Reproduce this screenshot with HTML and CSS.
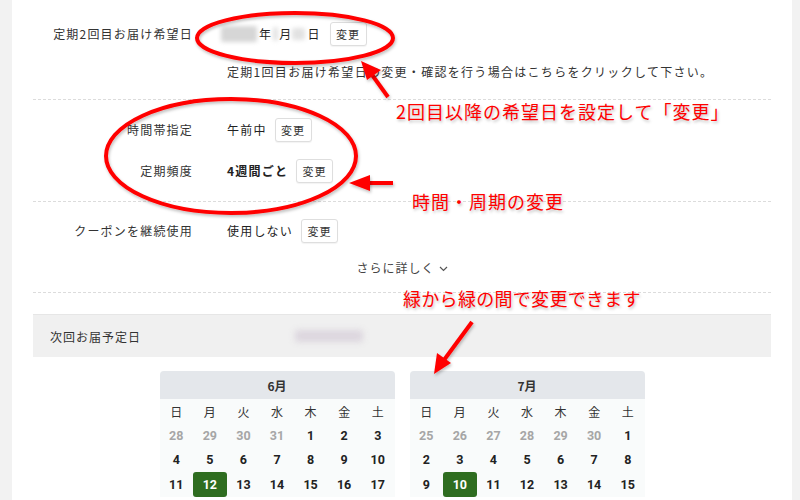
FILE: index.html
```html
<!DOCTYPE html>
<html lang="ja">
<head>
<meta charset="utf-8">
<link rel="stylesheet" href="styles.css">
</head>
<body>
<div class="page">
  <main class="main">
    <section class="sec sec1">
      <div class="row">
        <div class="label">定期2回目お届け希望日</div>
        <div class="value date">
          <span class="blur blur-y"></span><span>年</span><span class="blur blur-m"></span><span>月</span><span class="blur blur-d"></span><span>日</span>
          <button class="btn btn-first">変更</button>
        </div>
      </div>
      <p class="note">定期1回目お届け希望日の変更・確認を行う場合はこちらをクリックして下さい。</p>
    </section>
    <section class="sec sec2">
      <div class="row">
        <div class="label">時間帯指定</div>
        <div class="value">午前中<button class="btn">変更</button></div>
      </div>
      <div class="row">
        <div class="label">定期頻度</div>
        <div class="value strong">4週間ごと<button class="btn">変更</button></div>
      </div>
    </section>
    <section class="sec sec3">
      <div class="row">
        <div class="label">クーポンを継続使用</div>
        <div class="value">使用しない<button class="btn">変更</button></div>
      </div>
      <div class="more">さらに詳しく<svg class="chev" width="9" height="6" viewBox="0 0 9 6"><path d="M1 1 L4.5 4.5 L8 1" fill="none" stroke="#555" stroke-width="1.2"/></svg></div>
    </section>
    <div class="next">
      <span class="next-label">次回お届予定日</span>
      <span class="blur blur-next"></span>
    </div>
    <div class="cals">
      <div class="cal">
        <div class="cal-head">6月</div>
        <div class="cal-grid">
          <span class="dn">日</span><span class="dn">月</span><span class="dn">火</span><span class="dn">水</span><span class="dn">木</span><span class="dn">金</span><span class="dn">土</span>
          <span class="d off">28</span><span class="d off">29</span><span class="d off">30</span><span class="d off">31</span><span class="d">1</span><span class="d">2</span><span class="d">3</span>
          <span class="d">4</span><span class="d">5</span><span class="d">6</span><span class="d">7</span><span class="d">8</span><span class="d">9</span><span class="d">10</span>
          <span class="d">11</span><span class="d sel">12</span><span class="d">13</span><span class="d">14</span><span class="d">15</span><span class="d">16</span><span class="d">17</span>
        </div>
      </div>
      <div class="cal">
        <div class="cal-head">7月</div>
        <div class="cal-grid">
          <span class="dn">日</span><span class="dn">月</span><span class="dn">火</span><span class="dn">水</span><span class="dn">木</span><span class="dn">金</span><span class="dn">土</span>
          <span class="d off">25</span><span class="d off">26</span><span class="d off">27</span><span class="d off">28</span><span class="d off">29</span><span class="d off">30</span><span class="d">1</span>
          <span class="d">2</span><span class="d">3</span><span class="d">4</span><span class="d">5</span><span class="d">6</span><span class="d">7</span><span class="d">8</span>
          <span class="d">9</span><span class="d sel">10</span><span class="d">11</span><span class="d">12</span><span class="d">13</span><span class="d">14</span><span class="d">15</span>
        </div>
      </div>
    </div>
  </main>

  <svg class="marks" width="800" height="500" viewBox="0 0 800 500">
    <defs>
      <filter id="sh" x="-10%" y="-10%" width="130%" height="140%">
        <feDropShadow dx="1" dy="2" stdDeviation="1.5" flood-color="#000" flood-opacity="0.25"/>
      </filter>
    </defs>
    <g filter="url(#sh)" fill="none" stroke="#f00" stroke-width="4">
      <ellipse cx="295" cy="38" rx="98" ry="25"/>
      <ellipse cx="231" cy="156" rx="125" ry="57"/>
      <line x1="388" y1="97" x2="370" y2="72"/>
      <line x1="393" y1="183" x2="366" y2="183"/>
      <line x1="472" y1="322" x2="444" y2="360"/>
    </g>
    <g filter="url(#sh)" fill="#f00">
      <polygon points="361,61 381,70 367,80"/>
      <polygon points="349,183 370,175 370,191"/>
      <polygon points="434,374 437,353 451,363"/>
    </g>
  </svg>
  <div class="ann ann1">2回目以降の希望日を設定して「変更」</div>
  <div class="ann ann2">時間・周期の変更</div>
  <div class="ann ann3">緑から緑の間で変更できます</div>
</div>
</body>
</html>
```

FILE: styles.css
```css
html, body {
  margin: 0;
  padding: 0;
}
body {
  width: 800px;
  height: 500px;
  overflow: hidden;
  background: #f2f2f2;
  font-family: "Noto Sans CJK JP", "Noto Sans", sans-serif;
  color: #333;
}
.page {
  position: relative;
  width: 800px;
  height: 500px;
}
.main {
  margin-left: 12px;
  width: 738px;
  height: 500px;
  background: #fff;
  padding: 0 21px;
}
.sec {
  border-bottom: 1px dashed #dcdcdc;
}
.sec1 {
  padding: 21px 0 19px;
}
.sec2 {
  padding: 17px 0 18px;
  display: flex;
  flex-direction: column;
  gap: 16px;
}
.sec3 {
  padding: 16px 0 16px;
}
.row {
  display: grid;
  grid-template-columns: 160px 1fr;
  column-gap: 34px;
  align-items: center;
  height: 25px;
  font-size: 12px;
  letter-spacing: 1.2px;
}
.label {
  text-align: right;
  color: #333;
}
.value {
  display: flex;
  align-items: center;
  color: #222;
}
.value.strong {
  font-weight: 700;
  letter-spacing: 1.2px;
}
.btn {
  margin-left: 8px;
  height: 24px;
  width: 37px;
  padding: 0;
  border: 1px solid #dedede;
  border-radius: 3px;
  background: #fff;
  font-family: "Noto Sans CJK JP", sans-serif;
  font-size: 11px;
  font-weight: 400;
  letter-spacing: 1px;
  color: #333;
  box-shadow: 0 1px 1px rgba(0,0,0,0.05);
}
.btn-first {
  margin-left: 9px;
}
.blur {
  display: inline-block;
  background: #d6d6d6;
  filter: blur(2px);
  border-radius: 2px;
}
.blur-y { width: 36px; height: 16px; margin: 0 2px 0 -6px; }
.blur-m { width: 5px; height: 14px; margin: 0 1px 0 1px; background: #e2e2e2; }
.blur-d { width: 13px; height: 12px; margin: 0 2px 0 0; background: #e2e2e2; }
.note {
  margin: 18px 0 0 194px;
  font-size: 12px;
  letter-spacing: 1.3px;
  line-height: 16px;
  color: #333;
}
.more {
  margin-top: 16px;
  display: flex;
  justify-content: center;
  align-items: center;
  gap: 4px;
  font-size: 12px;
  letter-spacing: 1px;
  color: #444;
}
.chev {
  margin-top: 2px;
}
.next {
  margin-top: 21px;
  height: 42px;
  background: #f0f0f0;
  border-top: 1px solid #e6e6e6;
  display: flex;
  align-items: center;
  padding-left: 17px;
  font-size: 12px;
  letter-spacing: 1px;
}
.next-label {
  width: 245px;
}
.blur-next {
  width: 68px;
  height: 12px;
  background: #dcd6de;
  filter: blur(3px);
}
.cals {
  margin-top: 14px;
  display: flex;
  justify-content: center;
  gap: 15px;
}
.cal {
  width: 235px;
  background: #f9fbfb;
  border-radius: 4px 4px 0 0;
  overflow: hidden;
}
.cal-head {
  height: 28px;
  background: #e4e7eb;
  display: flex;
  align-items: center;
  justify-content: center;
  font-family: "Noto Sans CJK JP", sans-serif;
  font-size: 12px;
  font-weight: 700;
  color: #333;
}
.cal-grid {
  display: grid;
  grid-template-columns: repeat(7, 1fr);
  grid-template-rows: 24px repeat(3, 24.5px);
}
.dn {
  display: flex;
  align-items: center;
  justify-content: center;
  font-size: 12px;
  color: #333;
}
.d {
  display: flex;
  align-items: center;
  justify-content: center;
  font-family: Roboto, "Noto Sans", sans-serif;
  font-weight: 700;
  font-size: 12.5px;
  color: #222;
}
.d.off {
  color: #a6a6a6;
}
.d.sel {
  background: #2f6d20;
  color: #fff;
  border-radius: 3px;
}
.marks {
  position: absolute;
  left: 0;
  top: 0;
  pointer-events: none;
}
.ann {
  position: absolute;
  font-family: "Noto Sans CJK JP", sans-serif;
  font-size: 18px;
  line-height: 22px;
  color: #f00;
  white-space: nowrap;
  text-shadow: 1px 2px 3px rgba(0,0,0,0.25);
}
.ann1 { left: 396px; top: 100px; letter-spacing: 1px; }
.ann2 { left: 412px; top: 190px; letter-spacing: 1px; }
.ann3 { left: 403px; top: 287px; letter-spacing: 0.3px; }
```
